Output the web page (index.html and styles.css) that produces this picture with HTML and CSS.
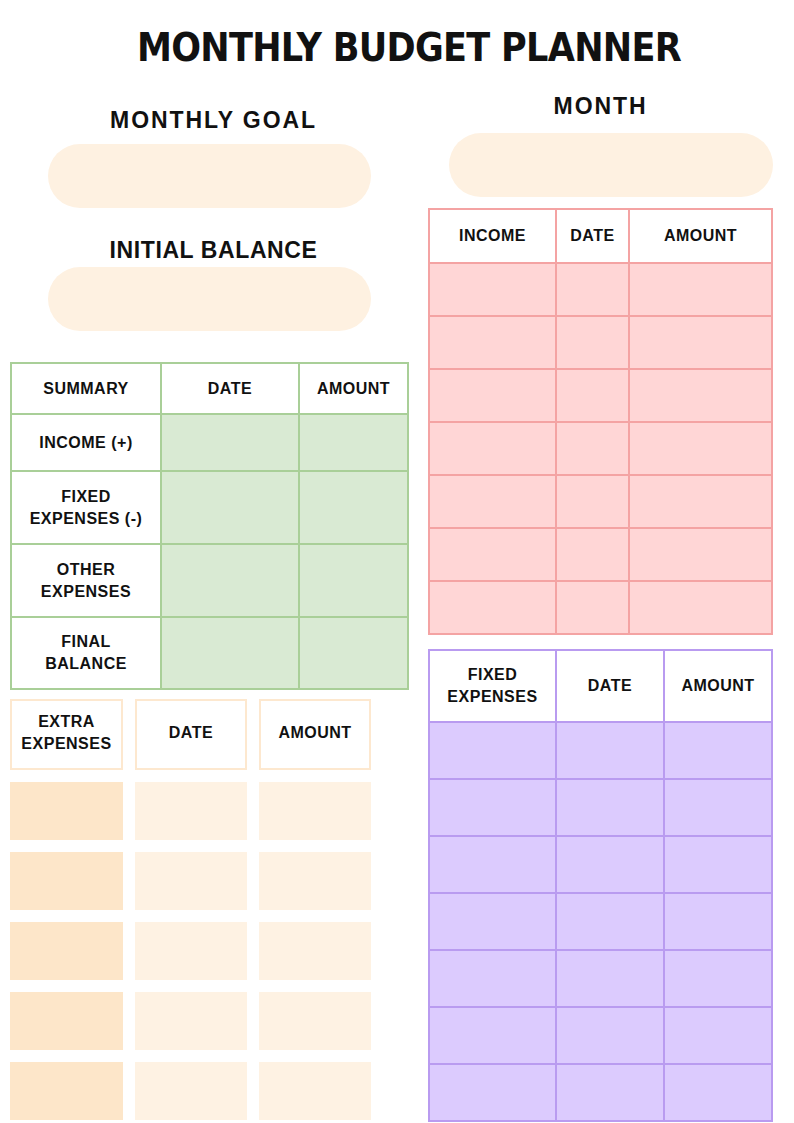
FILE: index.html
```html
<!DOCTYPE html>
<html lang="en">
<head>
<meta charset="utf-8">
<title>Monthly Budget Planner</title>
<link rel="stylesheet" href="styles.css">
</head>
<body>
<div class="page">
  <h1 class="title">MONTHLY BUDGET PLANNER</h1>
  <div class="columns">
    <div class="col-left">
      <div class="field">
        <h2 class="label label-goal">MONTHLY GOAL</h2>
        <div class="pill"></div>
        <h2 class="label label-balance">INITIAL BALANCE</h2>
        <div class="pill pill-balance"></div>
      </div>

      <div class="table summary">
        <div class="cell head">SUMMARY</div>
        <div class="cell head">DATE</div>
        <div class="cell head">AMOUNT</div>
        <div class="cell head">INCOME (+)</div>
        <div class="cell fill"></div>
        <div class="cell fill"></div>
        <div class="cell head">FIXED<br>EXPENSES (-)</div>
        <div class="cell fill"></div>
        <div class="cell fill"></div>
        <div class="cell head">OTHER<br>EXPENSES</div>
        <div class="cell fill"></div>
        <div class="cell fill"></div>
        <div class="cell head">FINAL<br>BALANCE</div>
        <div class="cell fill"></div>
        <div class="cell fill"></div>
      </div>

      <div class="extra">
        <div class="xhead">EXTRA<br>EXPENSES</div>
        <div class="xhead">DATE</div>
        <div class="xhead">AMOUNT</div>
        <div class="xcell dark"></div><div class="xcell"></div><div class="xcell"></div>
        <div class="xcell dark"></div><div class="xcell"></div><div class="xcell"></div>
        <div class="xcell dark"></div><div class="xcell"></div><div class="xcell"></div>
        <div class="xcell dark"></div><div class="xcell"></div><div class="xcell"></div>
        <div class="xcell dark"></div><div class="xcell"></div><div class="xcell"></div>
      </div>
    </div>

    <div class="col-right">
      <h2 class="label label-month">MONTH</h2>
      <div class="pill pill-month"></div>

      <div class="table income">
        <div class="cell head">INCOME</div>
        <div class="cell head">DATE</div>
        <div class="cell head">AMOUNT</div>
        <div class="cell fill"></div><div class="cell fill"></div><div class="cell fill"></div>
        <div class="cell fill"></div><div class="cell fill"></div><div class="cell fill"></div>
        <div class="cell fill"></div><div class="cell fill"></div><div class="cell fill"></div>
        <div class="cell fill"></div><div class="cell fill"></div><div class="cell fill"></div>
        <div class="cell fill"></div><div class="cell fill"></div><div class="cell fill"></div>
        <div class="cell fill"></div><div class="cell fill"></div><div class="cell fill"></div>
        <div class="cell fill"></div><div class="cell fill"></div><div class="cell fill"></div>
      </div>

      <div class="table fixed">
        <div class="cell head">FIXED<br>EXPENSES</div>
        <div class="cell head">DATE</div>
        <div class="cell head">AMOUNT</div>
        <div class="cell fill"></div><div class="cell fill"></div><div class="cell fill"></div>
        <div class="cell fill"></div><div class="cell fill"></div><div class="cell fill"></div>
        <div class="cell fill"></div><div class="cell fill"></div><div class="cell fill"></div>
        <div class="cell fill"></div><div class="cell fill"></div><div class="cell fill"></div>
        <div class="cell fill"></div><div class="cell fill"></div><div class="cell fill"></div>
        <div class="cell fill"></div><div class="cell fill"></div><div class="cell fill"></div>
        <div class="cell fill"></div><div class="cell fill"></div><div class="cell fill"></div>
      </div>
    </div>
  </div>
</div>
</body>
</html>
```

FILE: styles.css
```css
* { box-sizing: border-box; }

html, body {
  margin: 0;
  padding: 0;
  background: #ffffff;
}

body {
  width: 794px;
  height: 1123px;
  overflow: hidden;
  font-family: "Liberation Sans", Arial, sans-serif;
  color: #111111;
}

.page {
  padding-top: 24px;
}

.title {
  margin: 0;
  font-family: "DejaVu Sans Condensed", "Liberation Sans", sans-serif;
  font-stretch: condensed;
  font-size: 39px;
  line-height: 48px;
  font-weight: 700;
  letter-spacing: -0.7px;
  text-align: center;
  padding-left: 24px;
}

.columns {
  display: grid;
  grid-template-columns: 420px 374px;
}

.label {
  margin: 0;
  font-size: 23px;
  line-height: 28px;
  font-weight: 700;
  letter-spacing: 1.9px;
  text-align: center;
}

.field {
  margin-left: 48px;
  width: 323px;
}

.field .label { padding-left: 8px; }

.label-goal { margin-top: 34px; }
.label-balance {
  margin-top: 28px;
  letter-spacing: 0.6px;
}

.pill {
  height: 64px;
  border-radius: 32px;
  background: #fef1e1;
  margin-top: 10px;
}

.pill-balance { margin-top: 3px; }

.table {
  display: grid;
  gap: 2px;
  padding: 2px;
}

.cell {
  display: flex;
  align-items: center;
  justify-content: center;
  text-align: center;
}

.cell.head {
  background: #ffffff;
  font-size: 16px;
  line-height: 22px;
  font-weight: 700;
  letter-spacing: 0.5px;
}

/* Summary (green) */
.summary {
  margin-top: 31px;
  margin-left: 10px;
  width: 399px;
  background: #a9cf98;
  grid-template-columns: 148px 136px 107px;
  grid-template-rows: 49px 55px 71px 71px 70px;
}

.summary .fill { background: #d9ead3; }

/* Extra expenses (orange) */
.extra {
  margin-top: 9px;
  margin-left: 10px;
  display: grid;
  grid-template-columns: 113px 112px 112px;
  grid-template-rows: 71px repeat(5, 58px);
  column-gap: 12px;
  row-gap: 12px;
}

.xhead {
  border: 2px solid #fde8cf;
  background: #ffffff;
  display: flex;
  align-items: center;
  justify-content: center;
  text-align: center;
  font-size: 16px;
  line-height: 22px;
  font-weight: 700;
  letter-spacing: 0.5px;
  padding-bottom: 3px;
}

.xcell { background: #fef2e3; }
.xcell.dark { background: #fde6c9; }

/* Right column */
.label-month {
  margin-top: 20px;
  margin-left: 8px;
  width: 345px;
}

.pill-month {
  margin-left: 29px;
  width: 324px;
  margin-top: 13px;
}

/* Income (red) */
.income {
  margin-top: 11px;
  margin-left: 8px;
  width: 345px;
  background: #f4a3a3;
  grid-template-columns: 125px 71px 141px;
  grid-template-rows: 52px repeat(7, 51px);
}

.income .fill { background: #ffd6d6; }

/* Fixed expenses (purple) */
.fixed {
  margin-top: 14px;
  margin-left: 8px;
  width: 345px;
  background: #b99bf0;
  grid-template-columns: 125px 106px 106px;
  grid-template-rows: 70px repeat(7, 55px);
}

.fixed .fill { background: #dccbfe; }
```
